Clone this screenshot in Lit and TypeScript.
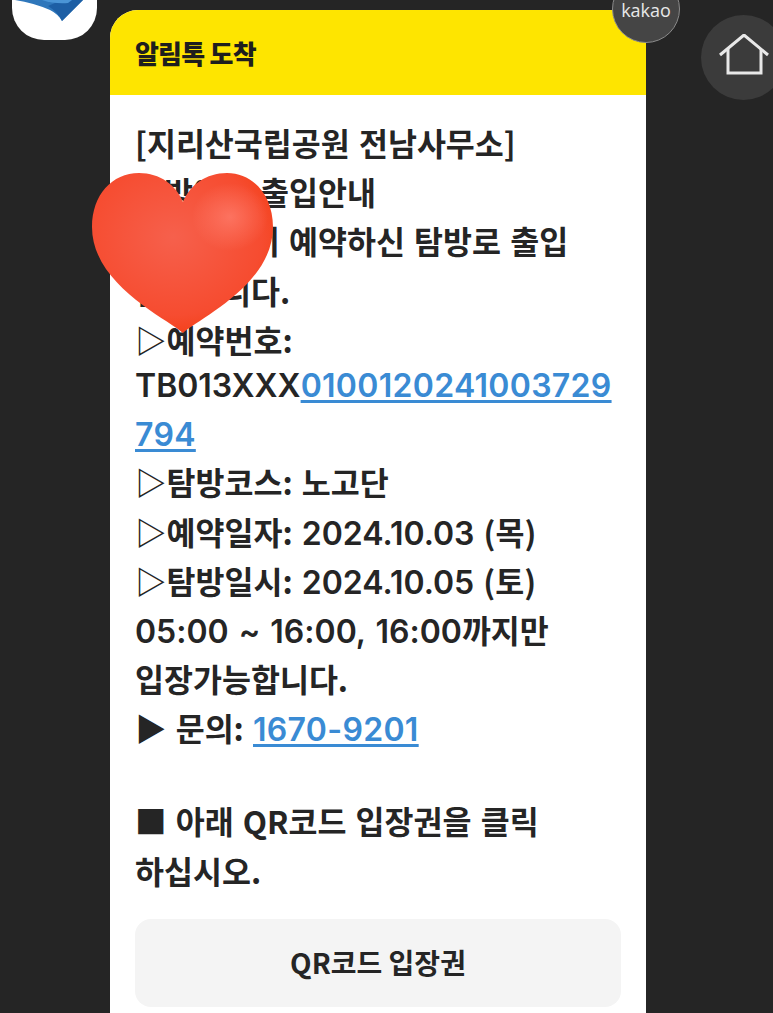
import { LitElement, html, css } from "lit";
import { customElement } from "lit/decorators.js";

@customElement("app-root")
export class AppRoot extends LitElement {
  static styles = css`
    :host { display: block; }
    .page {
      position: relative; width: 773px; height: 1013px; overflow: hidden;
      background: #252525; padding: 10px 0 0 110px; box-sizing: border-box;
      font-family: "Noto Sans CJK KR", "Noto Sans", sans-serif; color: #252525;
    }
    .card { width: 536px; height: 1030px; background: #fff; border-radius: 28px; overflow: hidden; }
    .head { height: 85px; background: #fee500; display: flex; align-items: center; padding: 0 25px; box-sizing: border-box;
      font-size: 26px; font-weight: 900; color: #1e1e1e; letter-spacing: -0.8px; }
    .body { padding: 23px 25px 0; font-size: 31.5px; font-weight: 700; line-height: 49.2px; word-spacing: 2px; }
    .line { white-space: nowrap; height: 49.2px; }
    .shift { margin-top: -5px; }
    .lat { font-family: "Inter", "Noto Sans CJK KR", sans-serif; font-weight: 600; font-size: 32px; }
    a { color: #3a8bd4; text-decoration: underline; text-decoration-thickness: 3px; text-underline-offset: 3px; font-family: "Inter", sans-serif; font-size: 32px; font-weight: 600; letter-spacing: 0.3px; }
    .gap { height: 44px; }
    .btn { margin-top: 24px; height: 88px; background: #f4f4f4; border-radius: 16px; display: flex; align-items: center; justify-content: center;
      font-size: 28px; font-weight: 700; word-spacing: 0; }
    .logo { position: absolute; left: 12px; top: -50px; width: 85px; height: 90px; background: #fff; border-radius: 32px; overflow: hidden; }
    .logo svg { display: block; }
    .badge { position: absolute; left: 612px; top: -25px; width: 68px; height: 68px; border-radius: 50%; background: #454545;
      border: 1px solid #8a8a8a; box-sizing: border-box; color: #e8e8e8; font-family: "Open Sans", sans-serif; font-size: 18px;
      display: flex; align-items: flex-end; justify-content: center; padding-bottom: 20px; }
    .home { position: absolute; left: 701px; top: 15px; width: 85px; height: 85px; border-radius: 50%; background: #3b3b3b; }
    .home svg { position: absolute; left: 18px; top: 19px; }
    .heart { position: absolute; left: 92px; top: 173px; }
  `;

  render() {
    return html`<div class="page">
      <div class="card">
        <div class="head">알림톡 도착</div>
        <div class="body">
          <div class="line">[지리산국립공원 전남사무소]</div>
          <div class="line">탐방예약 출입안내</div>
          <div class="line">탐방객님이 예약하신 탐방로 출입</div>
          <div class="line">안내입니다.</div>
          <div class="line">▷예약번호:</div>
          <div class="line shift"><span class="lat">TB013XXX</span><a href="#">0100120241003729</a></div>
          <div class="line"><a href="#">794</a></div>
          <div class="line">▷탐방코스: 노고단</div>
          <div class="line">▷예약일자: <span class="lat">2024.10.03</span> (목)</div>
          <div class="line">▷탐방일시: <span class="lat">2024.10.05</span> (토)</div>
          <div class="line"><span class="lat">05:00 ~ 16:00, 16:00</span>까지만</div>
          <div class="line">입장가능합니다.</div>
          <div class="line">▶ 문의: <a href="#">1670-9201</a></div>
          <div class="gap"></div>
          <div class="line">■ 아래 QR코드 입장권을 클릭</div>
          <div class="line">하십시오.</div>
          <div class="btn">QR코드 입장권</div>
        </div>
      </div>
      <div class="logo">
        <svg width="85" height="90" viewBox="0 0 85 90">
          <path d="M3 50H71L50 71Q46 64 38 60Q22 53 3 50Z" fill="#2f77bb"/>
          <path d="M36 56Q46 62 50 71L71 50H50Z" fill="#1d5fa5"/>
          <path d="M30 50H60L56 53Q42 54 30 50Z" fill="#4a95d6"/>
        </svg>
      </div>
      <div class="badge">kakao</div>
      <div class="home">
        <svg width="50" height="42" viewBox="0 0 50 42" fill="none" stroke="#e8e8e8" stroke-width="3">
          <path d="M1 21L25 1L49 21"/>
          <path d="M9 15V39H42V15"/>
        </svg>
      </div>
      <svg class="heart" width="182" height="161" viewBox="0 0 182 161">
        <defs>
          <radialGradient id="hg" cx="0.45" cy="0.4" r="0.7">
            <stop offset="0" stop-color="#f6604c"/>
            <stop offset="0.7" stop-color="#f64c30"/>
            <stop offset="1" stop-color="#f23a0c"/>
          </radialGradient>
          <radialGradient id="hl" cx="0.5" cy="0.5" r="0.5">
            <stop offset="0" stop-color="#ff8070" stop-opacity="0.7"/>
            <stop offset="1" stop-color="#ff8070" stop-opacity="0"/>
          </radialGradient>
        </defs>
        <path d="M91 160C106 146 181 112 181 54C181 22 161 0 135 0C114 0 98 12 91 29C84 12 68 0 47 0C20 0 0 22 0 54C0 112 76 146 91 160Z" fill="url(#hg)"/>
        <ellipse cx="138" cy="44" rx="38" ry="34" fill="url(#hl)"/>
      </svg>
    </div>`;
  }
}
